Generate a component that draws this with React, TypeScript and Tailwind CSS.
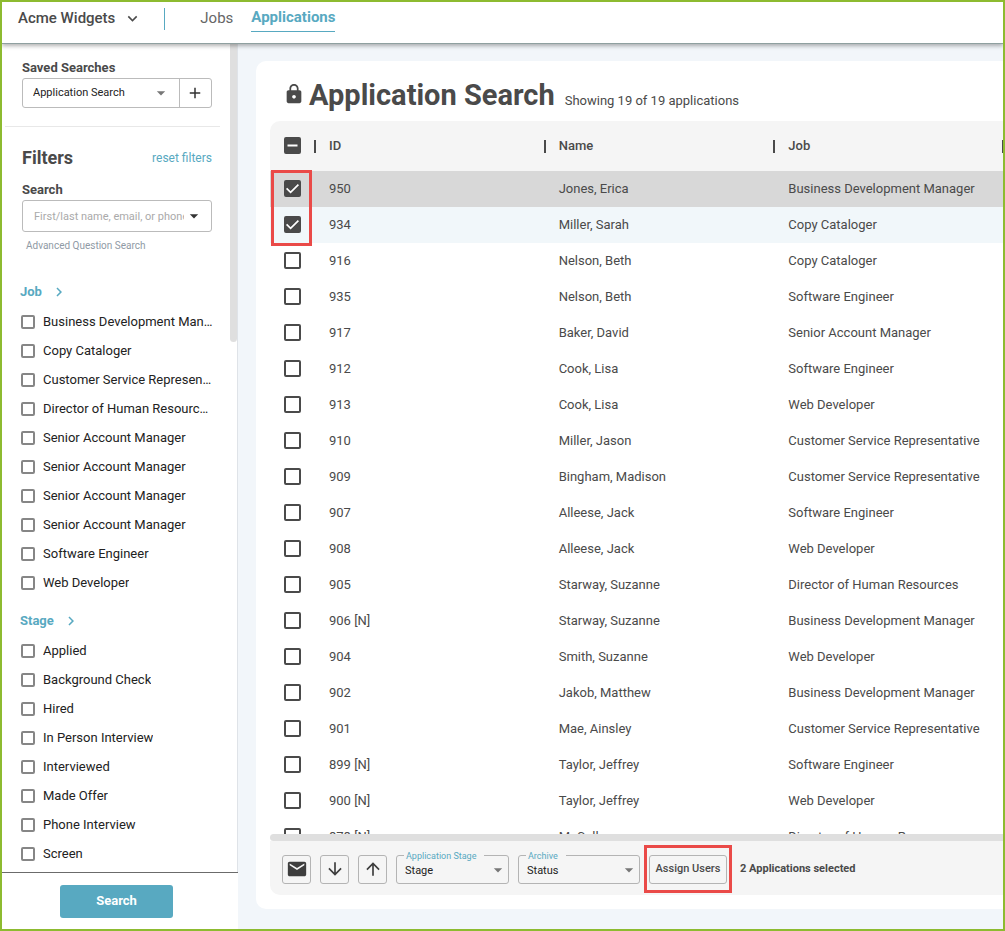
import React, { useState } from "react";
import {
  MdLock,
  MdEmail,
  MdArrowDownward,
  MdArrowUpward,
  MdArrowDropDown,
  MdAdd,
  MdKeyboardArrowDown,
  MdChevronRight,
} from "react-icons/md";

type Application = { id: string; name: string; job: string };

const jobFilters = [
  "Business Development Manager",
  "Copy Cataloger",
  "Customer Service Representative",
  "Director of Human Resources",
  "Senior Account Manager",
  "Senior Account Manager",
  "Senior Account Manager",
  "Senior Account Manager",
  "Software Engineer",
  "Web Developer",
];

const stageFilters = [
  "Applied",
  "Background Check",
  "Hired",
  "In Person Interview",
  "Interviewed",
  "Made Offer",
  "Phone Interview",
  "Screen",
];

const applications: Application[] = [
  { id: "950", name: "Jones, Erica", job: "Business Development Manager" },
  { id: "934", name: "Miller, Sarah", job: "Copy Cataloger" },
  { id: "916", name: "Nelson, Beth", job: "Copy Cataloger" },
  { id: "935", name: "Nelson, Beth", job: "Software Engineer" },
  { id: "917", name: "Baker, David", job: "Senior Account Manager" },
  { id: "912", name: "Cook, Lisa", job: "Software Engineer" },
  { id: "913", name: "Cook, Lisa", job: "Web Developer" },
  { id: "910", name: "Miller, Jason", job: "Customer Service Representative" },
  { id: "909", name: "Bingham, Madison", job: "Customer Service Representative" },
  { id: "907", name: "Alleese, Jack", job: "Software Engineer" },
  { id: "908", name: "Alleese, Jack", job: "Web Developer" },
  { id: "905", name: "Starway, Suzanne", job: "Director of Human Resources" },
  { id: "906 [N]", name: "Starway, Suzanne", job: "Business Development Manager" },
  { id: "904", name: "Smith, Suzanne", job: "Web Developer" },
  { id: "902", name: "Jakob, Matthew", job: "Business Development Manager" },
  { id: "901", name: "Mae, Ainsley", job: "Customer Service Representative" },
  { id: "899 [N]", name: "Taylor, Jeffrey", job: "Software Engineer" },
  { id: "900 [N]", name: "Taylor, Jeffrey", job: "Web Developer" },
  { id: "878 [N]", name: "McCall", job: "Director of Human Resources" },
];

function RowCheckbox({
  label,
  checked,
  mixed = false,
  onChange,
}: {
  label: string;
  checked: boolean;
  mixed?: boolean;
  onChange: () => void;
}) {
  return (
    <span className="relative mb-px block size-[17px]">
      <input
        type="checkbox"
        aria-label={label}
        checked={checked}
        onChange={onChange}
        className="block size-[17px] appearance-none rounded-[2px] border-2 border-[#4a4a4a] checked:bg-[#4a4a4a]"
      />
      {checked && (
        <svg viewBox="0 0 17 17" className="pointer-events-none absolute inset-0 size-[17px]" fill="none" stroke="#fff" strokeWidth="1.7">
          {mixed ? <path d="M3.5 8.5h10" strokeWidth="2" /> : <path d="M2.6 8.4l4 4 7.8-7.8" />}
        </svg>
      )}
    </span>
  );
}

function FilterGroup({ title, items }: { title: string; items: string[] }) {
  return (
    <section>
      <button className="flex h-[18px] items-center gap-2 pl-[18px] text-[13px] font-bold text-[#58a9c1]">
        {title}
        <MdChevronRight className="size-[18px]" />
      </button>
      <ul className="mt-[6px]">
        {items.map((item, i) => (
          <li key={i} className="h-[29px]">
            <label className="flex h-[29px] items-center gap-2 pr-[17px] pl-[19px] text-[13px] text-[#222]">
              <input type="checkbox" className="size-[14px] shrink-0 appearance-none rounded-[2px] border-2 border-[#868686] checked:bg-[#58a9c1]" />
              <span className="truncate">{item}</span>
            </label>
          </li>
        ))}
      </ul>
    </section>
  );
}

function OutlinedSelect({ id, label, value, className }: { id: string; label: string; value: string; className: string }) {
  return (
    <div className={"relative h-[29px] " + className}>
      <label htmlFor={id} className="absolute -top-[5px] left-[8px] bg-[#f5f5f5] pr-2 pl-[2px] text-[9px] leading-[12px] text-[#58a9c1]">
        {label}
      </label>
      <select id={id} className="h-full w-full appearance-none rounded-[3px] border border-[#b4b4b4] pt-1 pl-2 text-[11px] text-[#222]">
        <option>{value}</option>
      </select>
      <MdArrowDropDown className="pointer-events-none absolute top-[5px] right-px size-[20px] text-[#777]" />
    </div>
  );
}

const iconButton = "flex h-[29px] w-[29px] items-center justify-center rounded-[3px] border border-[#b4b4b4] text-[#3d3d3d]";

export default function App() {
  const [selected, setSelected] = useState<string[]>(["950", "934"]);
  const toggle = (id: string) =>
    setSelected((s) => (s.includes(id) ? s.filter((x) => x !== id) : [...s, id]));

  return (
    <div className="flex h-screen flex-col overflow-hidden border-2 border-[#8dbb30] bg-[#f2f6fa] font-[Roboto,sans-serif] text-[#4a4a4a]">
      <header className="relative z-10 flex h-[42px] shrink-0 items-center border-b border-[#8fa0a0] bg-white pb-2 shadow-[0_2px_4px_rgba(0,0,0,0.3)]">
        <button className="flex items-center gap-2 pl-4 text-[15px] font-medium">
          Acme Widgets
          <MdKeyboardArrowDown className="size-[19px]" />
        </button>
        <span className="ml-[22px] h-[22px] w-px bg-[#58a9c1]" />
        <nav className="ml-[35px] flex items-center gap-[18px] text-[15px]">
          <a href="#jobs" className="text-[#666]">Jobs</a>
          <a href="#applications" className="border-b border-[#58a9c1] pt-px pb-[3px] font-bold text-[#58a9c1]">Applications</a>
        </nav>
      </header>

      <div className="flex min-h-0 flex-1">
        <aside className="flex w-[236px] shrink-0 flex-col bg-white">
          <div className="flex min-h-0 flex-1 border-b border-[#6b6b6b]">
            <div className="min-w-0 flex-1 overflow-hidden">
              <div className="pt-[15px] pr-[18px] pl-5">
                <label htmlFor="saved" className="block text-[13px] leading-[18px] font-bold">Saved Searches</label>
                <div className="mt-px flex h-[30px] rounded-[3px] border border-[#bbb]">
                  <div className="relative flex-1">
                    <select id="saved" className="h-full w-full appearance-none pl-[10px] text-[11px] text-[#222]">
                      <option>Application Search</option>
                    </select>
                    <MdArrowDropDown className="pointer-events-none absolute top-1 right-2 size-[20px] text-[#777]" />
                  </div>
                  <button aria-label="Add saved search" className="flex w-8 items-center justify-center border-l border-[#bbb] pr-[2px]">
                    <MdAdd className="size-[18px] text-[#333]" />
                  </button>
                </div>
              </div>
              <hr className="mt-[18px] mr-[10px] ml-[3px] border-[#e8e8e8]" />
              <div className="pr-[18px] pl-5">
                <div className="mt-[19px] flex items-center justify-between">
                  <h2 className="text-[18px] leading-[24px] font-bold">Filters</h2>
                  <a href="#reset" className="text-[12px] text-[#58a9c1]">reset filters</a>
                </div>
                <label htmlFor="query" className="mt-[11px] block text-[13px] leading-[18px] font-bold">Search</label>
                <div className="mt-px flex h-8 items-center rounded-[3px] border border-[#bbb] pl-[11px]">
                  <input id="query" placeholder="First/last name, email, or phone number" className="min-w-0 flex-1 pt-[2px] text-[11px] outline-none placeholder:text-[#aaa]" />
                  <MdArrowDropDown className="mr-[7px] size-[20px] text-[#333]" />
                </div>
                <a href="#advanced" className="mt-2 ml-1 block text-[10px] leading-[12px] text-[#8f9aa5]">Advanced Question Search</a>
              </div>
              <div className="mt-[31px] flex flex-col gap-[15px]">
                <FilterGroup title="Job" items={jobFilters} />
                <FilterGroup title="Stage" items={stageFilters} />
              </div>
            </div>
            <div className="w-2 border-r border-[#dfe3e8]">
              <div className="h-[298px] w-[7px] rounded-b-[4px] bg-[#dfdfdf]" />
            </div>
          </div>
          <div className="flex h-14 shrink-0 items-center pl-[58px]">
            <button className="h-[33px] w-[113px] rounded-[3px] bg-[#58a9c1] text-[13px] font-bold text-white">Search</button>
          </div>
        </aside>

        <main className="flex min-w-0 flex-1 pt-[17px] pb-5 pl-[18px]">
          <div className="flex min-w-0 flex-1 flex-col rounded-l-[10px] bg-white pb-[14px] pl-[14px]">
            <div className="flex h-[60px] shrink-0 items-center pt-[6px] pl-[13px]">
              <MdLock className="size-[22px]" />
              <div className="flex items-baseline gap-[10px] pt-[3px] pl-1">
                <h1 className="text-[29px] font-bold">Application Search</h1>
                <span className="text-[13px]">Showing 19 of 19 applications</span>
              </div>
            </div>

            <div className="min-h-0 flex-1 overflow-hidden rounded-tl-[10px]">
              <table className="relative w-full table-fixed border-collapse text-left text-[13px]">
                <thead>
                  <tr className="h-[50px] bg-[#f5f5f5]">
                    <th className="w-11 py-0 pr-0 pl-[14px]">
                      <RowCheckbox
                        label="Select all applications"
                        checked={selected.length > 0}
                        mixed={selected.length < applications.length}
                        onChange={() => setSelected(selected.length ? [] : applications.map((a) => a.id))}
                      />
                    </th>
                    {["ID", "Name", "Job"].map((h) => (
                      <th key={h} className="group p-0 font-medium">
                        <span className="flex h-[13px] items-center border-l-2 border-[#4a4a4a] pl-[13px] group-last:border-r">{h}</span>
                      </th>
                    ))}
                  </tr>
                </thead>
                <tbody>
                  {applications.map((a, i) => {
                    const isSelected = selected.includes(a.id);
                    return (
                      <tr key={a.id} className={i === 0 && isSelected ? "h-9 bg-[#d8d8d8]" : isSelected ? "h-9 bg-[#f1f7fa]" : "h-9"}>
                        <td className="py-0 pr-0 pl-[14px]">
                          <RowCheckbox label={"Select application " + a.id} checked={isSelected} onChange={() => toggle(a.id)} />
                          {i === 0 && <span className="pointer-events-none absolute top-[49px] left-px h-[76px] w-[41px] border-3 border-[#ea4a48]" />}
                        </td>
                        <td className="py-0 pl-[15px]">{a.id}</td>
                        <td className="py-0 pl-[15px]">{a.name}</td>
                        <td className="truncate py-0 pl-[15px]">{a.job}</td>
                      </tr>
                    );
                  })}
                </tbody>
              </table>
            </div>

            <div className="h-[7px] shrink-0 rounded-l-[4px] bg-[#dfdfdf]" />
            <div className="flex h-[54px] shrink-0 items-center gap-[9px] rounded-bl-[10px] bg-[#f5f5f5] pt-[2px] pl-3">
              <button aria-label="Email" className={iconButton}><MdEmail className="size-[22px]" /></button>
              <button aria-label="Move down" className={iconButton}><MdArrowDownward className="size-[20px]" /></button>
              <button aria-label="Move up" className={iconButton}><MdArrowUpward className="size-[20px]" /></button>
              <OutlinedSelect id="stage" label="Application Stage" value="Stage" className="w-[113px]" />
              <OutlinedSelect id="archive" label="Archive" value="Status" className="w-[122px]" />
              <div className="relative">
                <button className="h-[29px] w-[78px] rounded-[3px] border border-[#b4b4b4] text-[11px] font-medium">Assign Users</button>
                <span className="pointer-events-none absolute -inset-x-[5px] -top-[10px] h-12 border-3 border-[#ea4a48]" />
              </div>
              <span className="pl-1 text-[11px] font-bold">{selected.length} Applications selected</span>
            </div>
          </div>
        </main>
      </div>
    </div>
  );
}
